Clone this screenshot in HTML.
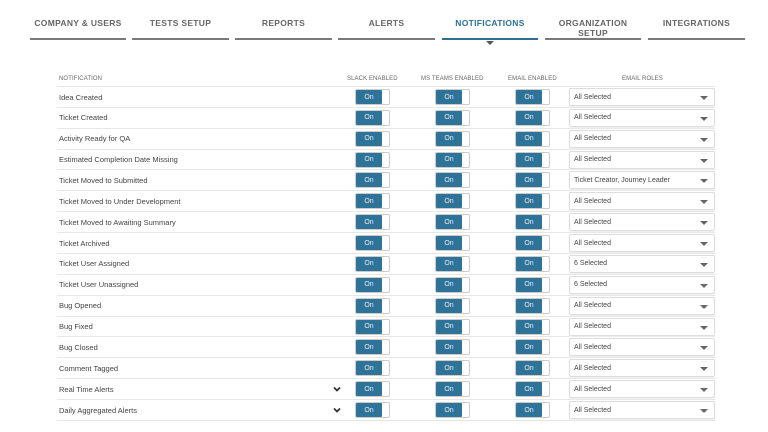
<!DOCTYPE html>
<html><head><meta charset="utf-8"><style>
*{margin:0;padding:0;box-sizing:border-box}
body{width:768px;height:432px;background:#fff;font-family:"Liberation Sans",sans-serif;position:relative;overflow:hidden}
.tab{position:absolute;top:18px;font-size:8.5px;font-weight:bold;color:#666;text-align:center;letter-spacing:.3px;line-height:10px}
.ul{position:absolute;top:38px;height:2px;background:#7a7a7a}
.hd{position:absolute;top:76px;font-size:6px;color:#666;letter-spacing:.1px}
.row{position:absolute;left:57px;width:658px;border-bottom:1px solid #e6e6e6}
.lbl{position:absolute;left:2px;top:0;height:20px;display:flex;align-items:center;font-size:7.5px;color:#444}
.tg{position:absolute;width:35px;height:16px;border:1px solid #ccc;border-radius:2px;background:#fff}
.tg b{position:absolute;left:0;top:0;width:26px;height:14px;background:#2f7399;color:#e8f0f5;font-weight:normal;font-size:7px;display:flex;align-items:center;justify-content:center;border-radius:1px}
.sel{position:absolute;left:512px;width:146px;height:18px;border:1px solid #ddd;border-radius:2px;font-size:7px;color:#444;display:flex;align-items:center;padding-left:4px;box-shadow:0 1px 1px #eee}
.sel i{position:absolute;right:6px;top:7px;border-left:4px solid transparent;border-right:4px solid transparent;border-top:4px solid #666}
.chev{position:absolute;left:276px;top:7px}
</style></head><body>
<div class="tab" style="left:30px;width:96px">COMPANY &amp; USERS</div>
<div class="tab" style="left:132px;width:97px">TESTS SETUP</div>
<div class="tab" style="left:235px;width:97px">REPORTS</div>
<div class="tab" style="left:338px;width:97px">ALERTS</div>
<div class="tab" style="left:442px;width:96px;color:#2e6f94">NOTIFICATIONS</div>
<div class="tab" style="left:545px;width:96px">ORGANIZATION<br>SETUP</div>
<div class="tab" style="left:648px;width:97px">INTEGRATIONS</div>
<div class="ul" style="left:30px;width:96px"></div>
<div class="ul" style="left:132px;width:97px"></div>
<div class="ul" style="left:235px;width:97px"></div>
<div class="ul" style="left:338px;width:97px"></div>
<div class="ul" style="left:442px;width:96px;background:#2e6f94"></div>
<div style="position:absolute;left:486px;top:41px;border-left:4px solid transparent;border-right:4px solid transparent;border-top:4px solid #555"></div>
<div class="ul" style="left:545px;width:96px"></div>
<div class="ul" style="left:648px;width:97px"></div>
<div class="hd" style="left:59px">NOTIFICATION</div>
<div class="hd" style="left:347px">SLACK ENABLED</div>
<div class="hd" style="left:421px">MS TEAMS ENABLED</div>
<div class="hd" style="left:508px">EMAIL ENABLED</div>
<div class="hd" style="left:622px">EMAIL ROLES</div>
<div class="row" style="top:86px;height:0"></div>
<div id="rows"></div>
<script>
var d=[["Idea Created","All Selected"],["Ticket Created","All Selected"],["Activity Ready for QA","All Selected"],["Estimated Completion Date Missing","All Selected"],["Ticket Moved to Submitted","Ticket Creator, Journey Leader"],["Ticket Moved to Under Development","All Selected"],["Ticket Moved to Awaiting Summary","All Selected"],["Ticket Archived","All Selected"],["Ticket User Assigned","6 Selected"],["Ticket User Unassigned","6 Selected"],["Bug Opened","All Selected"],["Bug Fixed","All Selected"],["Bug Closed","All Selected"],["Comment Tagged","All Selected"],["Real Time Alerts","All Selected"],["Daily Aggregated Alerts","All Selected"]];
var h="";
for(var i=0;i<d.length;i++){var t=87+i*20.87;
h+='<div class="row" style="top:'+t+'px;height:20.87px">'+
'<div class="lbl">'+d[i][0]+'</div>'+
(i>=14?'<svg class="chev" width="8" height="6" viewBox="0 0 8 6"><path d="M1 1.5L4 4.5L7 1.5" fill="none" stroke="#333" stroke-width="1.8"/></svg>':'')+
'<div class="tg" style="left:298px;top:2px"><b>On</b></div>'+
'<div class="tg" style="left:378px;top:2px"><b>On</b></div>'+
'<div class="tg" style="left:458px;top:2px"><b>On</b></div>'+
'<div class="sel" style="top:1px">'+d[i][1]+'<i></i></div></div>';}
document.getElementById("rows").innerHTML=h;
</script>
</body></html>
